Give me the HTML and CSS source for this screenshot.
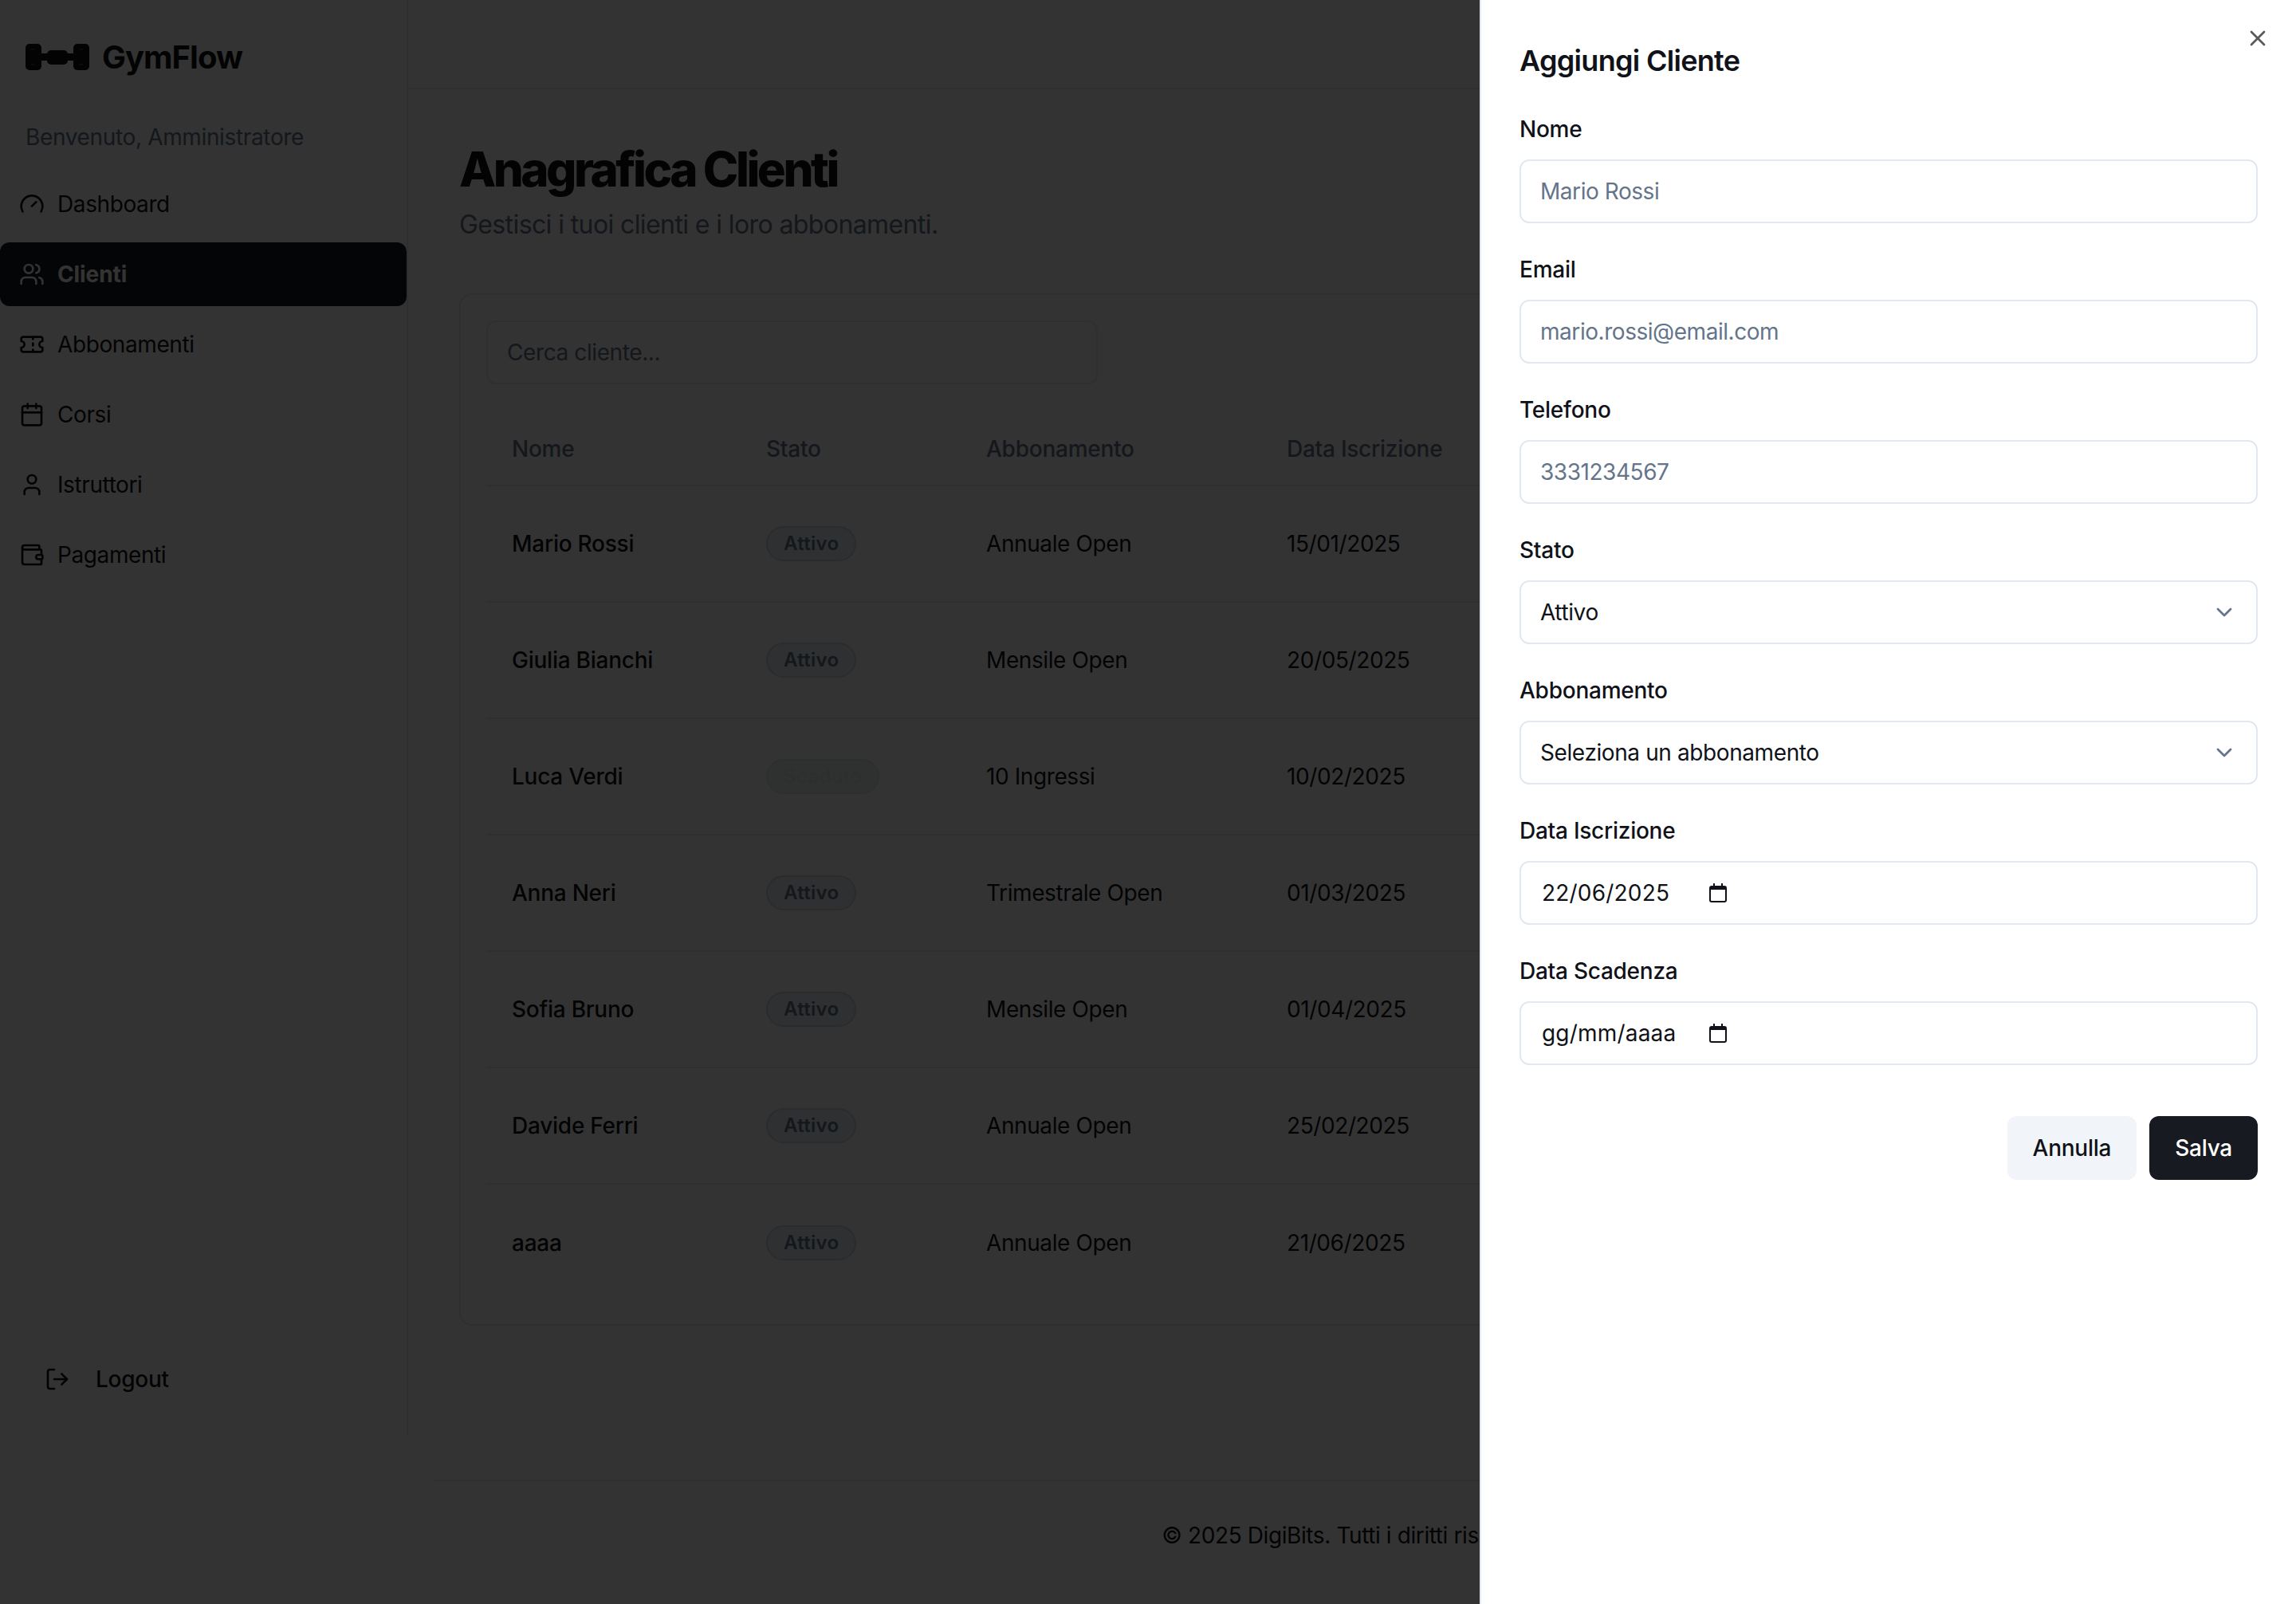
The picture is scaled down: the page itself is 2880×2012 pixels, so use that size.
FILE: index.html
```html
<!DOCTYPE html>
<html lang="it">
<head>
<meta charset="utf-8">
<title>GymFlow</title>
<link rel="stylesheet" href="styles.css">
</head>
<body>
<div class="app">
  <aside class="sidebar">
    <div class="brand">
      <svg class="brand-icon" viewBox="0 0 80 33"><rect x="0" y="0" width="20" height="33" rx="5"/><rect x="60" y="0" width="20" height="33" rx="5"/><rect x="18" y="12" width="44" height="9"/><rect x="27" y="8" width="26" height="18" rx="5"/><path class="brand-dash" d="M7 7h5M7 26h5M67 7h5M67 26h5"/></svg>
      <span class="brand-name">GymFlow</span>
    </div>
    <div class="welcome">Benvenuto, Amministratore</div>
    <nav class="nav">
      <a class="nav-item"><svg class="icon" viewBox="0 0 24 24"><path d="m12 14 4-4"/><path d="M3.34 19a10 10 0 1 1 17.32 0"/></svg>Dashboard</a>
      <a class="nav-item active"><svg class="icon" viewBox="0 0 24 24"><path d="M16 21v-2a4 4 0 0 0-4-4H6a4 4 0 0 0-4 4v2"/><circle cx="9" cy="7" r="4"/><path d="M22 21v-2a4 4 0 0 0-3-3.87"/><path d="M16 3.13a4 4 0 0 1 0 7.75"/></svg>Clienti</a>
      <a class="nav-item"><svg class="icon" viewBox="0 0 24 24"><path d="M2 9a3 3 0 0 1 0 6v2a2 2 0 0 0 2 2h16a2 2 0 0 0 2-2v-2a3 3 0 0 1 0-6V7a2 2 0 0 0-2-2H4a2 2 0 0 0-2 2Z"/><path d="M13 5v2"/><path d="M13 17v2"/><path d="M13 11v2"/></svg>Abbonamenti</a>
      <a class="nav-item"><svg class="icon" viewBox="0 0 24 24"><path d="M8 2v4"/><path d="M16 2v4"/><rect x="3" y="4" width="18" height="18" rx="2"/><path d="M3 10h18"/></svg>Corsi</a>
      <a class="nav-item"><svg class="icon" viewBox="0 0 24 24"><path d="M19 21v-2a4 4 0 0 0-4-4H9a4 4 0 0 0-4 4v2"/><circle cx="12" cy="7" r="4"/></svg>Istruttori</a>
      <a class="nav-item"><svg class="icon" viewBox="0 0 24 24"><path d="M19 7V4a1 1 0 0 0-1-1H5a2 2 0 0 0 0 4h15a1 1 0 0 1 1 1v4h-3a2 2 0 0 0 0 4h3a1 1 0 0 0 1-1v-2a1 1 0 0 0-1-1"/><path d="M3 5v14a2 2 0 0 0 2 2h15a1 1 0 0 0 1-1v-4"/></svg>Pagamenti</a>
    </nav>
    <a class="logout"><svg class="icon" viewBox="0 0 24 24"><path d="M9 21H5a2 2 0 0 1-2-2V5a2 2 0 0 1 2-2h4"/><path d="m16 17 5-5-5-5"/><path d="M21 12H9"/></svg>Logout</a>
  </aside>
  <div class="main">
    <header class="topbar"></header>
    <main class="content">
      <h1 class="title">Anagrafica Clienti</h1>
      <p class="subtitle">Gestisci i tuoi clienti e i loro abbonamenti.</p>
      <section class="card">
        <input class="search" type="text" placeholder="Cerca cliente...">
        <div class="table">
          <div class="row head"><span>Nome</span><span>Stato</span><span>Abbonamento</span><span>Data Iscrizione</span></div>
          <div class="row"><span class="name">Mario Rossi</span><span><b class="badge">Attivo</b></span><span>Annuale Open</span><span>15/01/2025</span></div>
          <div class="row"><span class="name">Giulia Bianchi</span><span><b class="badge">Attivo</b></span><span>Mensile Open</span><span>20/05/2025</span></div>
          <div class="row"><span class="name">Luca Verdi</span><span><b class="badge faded">Scaduto</b></span><span>10 Ingressi</span><span>10/02/2025</span></div>
          <div class="row"><span class="name">Anna Neri</span><span><b class="badge">Attivo</b></span><span>Trimestrale Open</span><span>01/03/2025</span></div>
          <div class="row"><span class="name">Sofia Bruno</span><span><b class="badge">Attivo</b></span><span>Mensile Open</span><span>01/04/2025</span></div>
          <div class="row"><span class="name">Davide Ferri</span><span><b class="badge">Attivo</b></span><span>Annuale Open</span><span>25/02/2025</span></div>
          <div class="row"><span class="name">aaaa</span><span><b class="badge">Attivo</b></span><span>Annuale Open</span><span>21/06/2025</span></div>
        </div>
      </section>
    </main>
    <footer class="footer">© 2025 DigiBits. Tutti i diritti riservati.</footer>
  </div>
</div>
<div class="overlay"></div>
<aside class="drawer">
  <svg class="close" viewBox="0 0 24 24"><path d="M18 6 6 18"/><path d="m6 6 12 12"/></svg>
  <h2 class="drawer-title">Aggiungi Cliente</h2>
  <form class="form">
    <div class="field"><label class="label">Nome</label><input class="control" type="text" placeholder="Mario Rossi"></div>
    <div class="field"><label class="label">Email</label><input class="control" type="text" placeholder="mario.rossi@email.com"></div>
    <div class="field"><label class="label">Telefono</label><input class="control" type="text" placeholder="3331234567"></div>
    <div class="field"><label class="label">Stato</label><div class="control select">Attivo<svg class="chevron" viewBox="0 0 24 24"><path d="m6 9 6 6 6-6"/></svg></div></div>
    <div class="field"><label class="label">Abbonamento</label><div class="control select">Seleziona un abbonamento<svg class="chevron" viewBox="0 0 24 24"><path d="m6 9 6 6 6-6"/></svg></div></div>
    <div class="field"><label class="label">Data Iscrizione</label><div class="control date"><span class="date-text">22/06/2025</span><svg class="cal" viewBox="0 0 22 24"><path d="M5 0h2v3h8V0h2v3h2a3 3 0 0 1 3 3v15a3 3 0 0 1-3 3H3a3 3 0 0 1-3-3V6a3 3 0 0 1 3-3h2Zm-3 8v13a1 1 0 0 0 1 1h16a1 1 0 0 0 1-1V8Z"/></svg></div></div>
    <div class="field"><label class="label">Data Scadenza</label><div class="control date"><span class="date-text">gg/mm/aaaa</span><svg class="cal" viewBox="0 0 22 24"><path d="M5 0h2v3h8V0h2v3h2a3 3 0 0 1 3 3v15a3 3 0 0 1-3 3H3a3 3 0 0 1-3-3V6a3 3 0 0 1 3-3h2Zm-3 8v13a1 1 0 0 0 1 1h16a1 1 0 0 0 1-1V8Z"/></svg></div></div>
    <div class="actions"><button class="btn secondary" type="button">Annulla</button><button class="btn primary" type="button">Salva</button></div>
  </form>
</aside>
</body>
</html>
```
FILE: styles.css
```css
* { box-sizing: border-box; }
html, body { margin: 0; height: 100%; overflow: hidden; }
body { font-family: Inter, "Liberation Sans", sans-serif; font-size: 28px; letter-spacing: -.4px; color: #0f1218; background: #fff; }

.app { display: flex; align-items: flex-start; height: 2012px; }

.sidebar { flex: 0 0 512px; height: 1800px; display: flex; flex-direction: column; border-right: 2px solid #e2e8f0; }
.brand { height: 143px; padding-left: 32px; display: flex; align-items: center; gap: 16px; }
.brand-icon { width: 80px; height: 33px; fill: #0f1218; }
.brand-dash { stroke: #3a4048; stroke-width: 1.5; fill: none; }
.brand-name { font-size: 40px; font-weight: 700; line-height: 48px; letter-spacing: -1px; }
.welcome { padding: 9px 0 0 32px; line-height: 40px; letter-spacing: -.35px; color: #64748b; }
.nav { margin-top: 24px; display: flex; flex-direction: column; gap: 8px; }
.nav-item { height: 80px; padding-left: 24px; display: flex; align-items: center; gap: 16px; border-radius: 12px; }
.nav-item.active { background: #171b21; color: #fff; font-weight: 700; letter-spacing: -.1px; }
.icon { width: 32px; height: 32px; flex: none; fill: none; stroke: currentColor; stroke-width: 2; stroke-linecap: round; stroke-linejoin: round; }
.logout { margin-top: auto; margin-bottom: 30px; padding-left: 56px; height: 80px; display: flex; align-items: center; gap: 32px; font-weight: 500; letter-spacing: -.25px; }

.main { flex: 1; min-width: 0; }
.topbar { height: 112px; border-bottom: 2px solid #e2e8f0; }
.content { padding: 64px 64px 0; }
.title { margin: 0; font-size: 60px; line-height: 72px; font-weight: 800; letter-spacing: -3.5px; }
.subtitle { margin: 10px 0 0; font-size: 32px; line-height: 48px; letter-spacing: -.6px; color: #64748b; }
.card { margin-top: 62px; padding: 32px; height: 1295px; border: 2px solid #e2e8f0; border-radius: 16px; }
.search { display: block; width: 767px; height: 80px; padding: 0 24px; border: 2px solid #e2e8f0; border-radius: 12px; font: inherit; letter-spacing: -.4px; background: #fff; outline: none; }
.search::placeholder { color: #64748b; }
.table { margin-top: 36px; }
.row { display: grid; grid-template-columns: 319px 276px 377px 1fr; height: 146px; align-items: center; padding-left: 32px; border-bottom: 2px solid #e2e8f0; }
.row:last-child { border-bottom: 0; }
.row.head { height: 92px; color: #64748b; font-weight: 500; letter-spacing: -.25px; }
.name { font-weight: 500; letter-spacing: -.25px; }
.badge { display: inline-block; height: 44px; padding: 0 20px; line-height: 40px; font-size: 24px; font-weight: 600; letter-spacing: .3px; color: #64748b; background: #e8edf2; border: 2px solid #d0d8e0; border-radius: 22px; }
.badge.faded { color: #dfe8e3; background: #ecf5f0; border-color: #e0e8e4; }

.footer { margin: 193px 32px 0; height: 138px; padding-top: 50px; border-top: 2px solid #e2e8f0; text-align: center; font-size: 28px; line-height: 36px; }

.overlay { position: fixed; inset: 0; background: rgba(0, 0, 0, .8); }

.drawer { position: fixed; top: 0; right: 0; bottom: 0; width: 1024px; padding: 56px 48px 0; background: #fff; border-left: 2px solid #e2e8f0; }
.close { position: absolute; top: 32px; right: 32px; width: 32px; height: 32px; fill: none; stroke: #0f1218; stroke-width: 2; stroke-linecap: round; stroke-linejoin: round; opacity: .7; }
.drawer-title { margin: 0; font-size: 36px; line-height: 40px; font-weight: 600; letter-spacing: -.7px; }
.form { margin-top: 52px; display: flex; flex-direction: column; gap: 44px; }
.field { display: flex; flex-direction: column; gap: 24px; }
.label { line-height: 28px; font-weight: 500; letter-spacing: -.25px; }
.control { display: flex; align-items: center; width: 926px; height: 80px; padding: 0 24px; border: 2px solid #e2e8f0; border-radius: 12px; font: inherit; letter-spacing: -.4px; color: #0f1218; background: #fff; outline: none; }
.control::placeholder { color: #64748b; letter-spacing: -.45px; }
.select { justify-content: space-between; }
.chevron { width: 32px; height: 32px; fill: none; stroke: #64748b; stroke-width: 2; stroke-linecap: round; stroke-linejoin: round; }
.date { padding-left: 26px; }
.date-text { width: 210px; letter-spacing: .2px; }
.cal { width: 22px; height: 24px; fill: #0f1218; }
.actions { margin-top: 20px; display: flex; justify-content: flex-end; gap: 16px; }
.btn { height: 80px; padding: 0 32px; border: 0; border-radius: 12px; font: inherit; font-weight: 500; letter-spacing: -.25px; }
.btn.secondary { background: #f1f5f9; color: #0f1218; }
.btn.primary { background: #171b21; color: #fff; }
```
